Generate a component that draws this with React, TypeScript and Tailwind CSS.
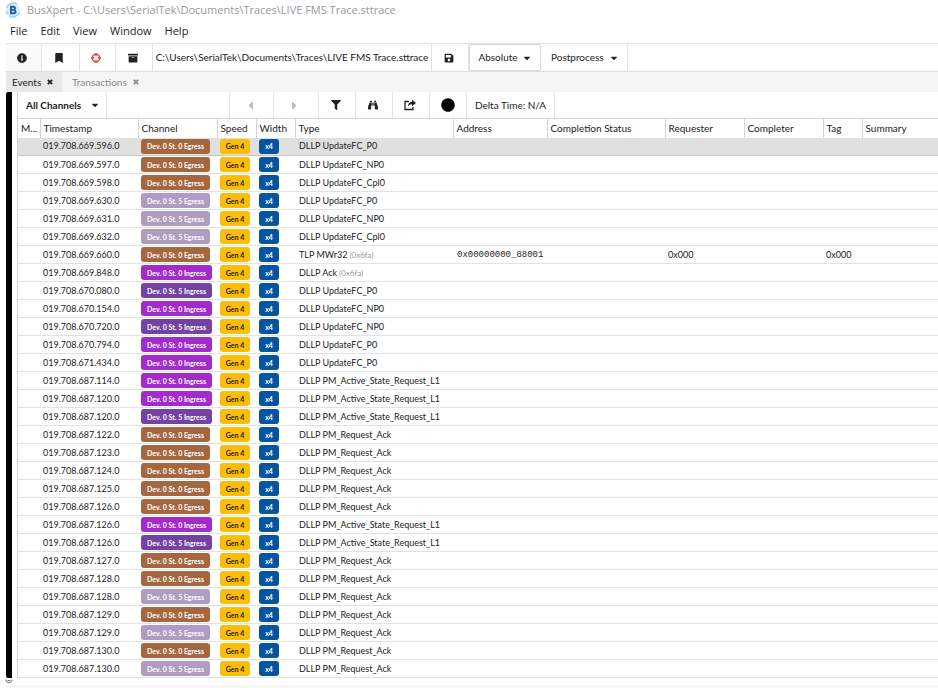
import {
  FaArchive,
  FaBinoculars,
  FaBookmark,
  FaCaretDown,
  FaCaretLeft,
  FaCaretRight,
  FaCircle,
  FaFilter,
  FaInfoCircle,
  FaSave,
} from "react-icons/fa";

type ChannelKey = "e0" | "e5" | "i0" | "i5";

interface TraceEvent {
  time: string;
  channel: ChannelKey;
  type: string;
  note?: string;
  address?: string;
  requester?: string;
  tag?: string;
}

const CHANNELS: Record<ChannelKey, { label: string; className: string }> = {
  e0: { label: "Dev. 0 St. 0 Egress", className: "w-[69px] bg-[#a5673f]" },
  e5: { label: "Dev. 0 St. 5 Egress", className: "w-[69px] bg-[#b09cc2]" },
  i0: { label: "Dev. 0 St. 0 Ingress", className: "w-[71px] bg-[#a32bcb]" },
  i5: { label: "Dev. 0 St. 5 Ingress", className: "w-[71px] bg-[#7442a5]" },
};

const EVENTS: TraceEvent[] = [
  { time: "019.708.669.596.0", channel: "e0", type: "DLLP UpdateFC_P0" },
  { time: "019.708.669.597.0", channel: "e0", type: "DLLP UpdateFC_NP0" },
  { time: "019.708.669.598.0", channel: "e0", type: "DLLP UpdateFC_Cpl0" },
  { time: "019.708.669.630.0", channel: "e5", type: "DLLP UpdateFC_P0" },
  { time: "019.708.669.631.0", channel: "e5", type: "DLLP UpdateFC_NP0" },
  { time: "019.708.669.632.0", channel: "e5", type: "DLLP UpdateFC_Cpl0" },
  {
    time: "019.708.669.660.0",
    channel: "e0",
    type: "TLP MWr32",
    note: "(0x6fa)",
    address: "0x00000000_88001",
    requester: "0x000",
    tag: "0x000",
  },
  { time: "019.708.669.848.0", channel: "i0", type: "DLLP Ack", note: "(0x6fa)" },
  { time: "019.708.670.080.0", channel: "i5", type: "DLLP UpdateFC_P0" },
  { time: "019.708.670.154.0", channel: "i0", type: "DLLP UpdateFC_NP0" },
  { time: "019.708.670.720.0", channel: "i5", type: "DLLP UpdateFC_NP0" },
  { time: "019.708.670.794.0", channel: "i0", type: "DLLP UpdateFC_P0" },
  { time: "019.708.671.434.0", channel: "i0", type: "DLLP UpdateFC_P0" },
  { time: "019.708.687.114.0", channel: "i0", type: "DLLP PM_Active_State_Request_L1" },
  { time: "019.708.687.120.0", channel: "i0", type: "DLLP PM_Active_State_Request_L1" },
  { time: "019.708.687.120.0", channel: "i5", type: "DLLP PM_Active_State_Request_L1" },
  { time: "019.708.687.122.0", channel: "e0", type: "DLLP PM_Request_Ack" },
  { time: "019.708.687.123.0", channel: "e0", type: "DLLP PM_Request_Ack" },
  { time: "019.708.687.124.0", channel: "e0", type: "DLLP PM_Request_Ack" },
  { time: "019.708.687.125.0", channel: "e0", type: "DLLP PM_Request_Ack" },
  { time: "019.708.687.126.0", channel: "e0", type: "DLLP PM_Request_Ack" },
  { time: "019.708.687.126.0", channel: "i0", type: "DLLP PM_Active_State_Request_L1" },
  { time: "019.708.687.126.0", channel: "i5", type: "DLLP PM_Active_State_Request_L1" },
  { time: "019.708.687.127.0", channel: "e0", type: "DLLP PM_Request_Ack" },
  { time: "019.708.687.128.0", channel: "e0", type: "DLLP PM_Request_Ack" },
  { time: "019.708.687.128.0", channel: "e5", type: "DLLP PM_Request_Ack" },
  { time: "019.708.687.129.0", channel: "e0", type: "DLLP PM_Request_Ack" },
  { time: "019.708.687.129.0", channel: "e5", type: "DLLP PM_Request_Ack" },
  { time: "019.708.687.130.0", channel: "e0", type: "DLLP PM_Request_Ack" },
  { time: "019.708.687.130.0", channel: "e5", type: "DLLP PM_Request_Ack" },
];

const COLUMNS = [
  { title: "M...", width: "w-[22px]" },
  { title: "Timestamp", width: "w-[98px]" },
  { title: "Channel", width: "w-[79px]" },
  { title: "Speed", width: "w-[39px]" },
  { title: "Width", width: "w-[39px]" },
  { title: "Type", width: "w-[158px]" },
  { title: "Address", width: "w-[94px]" },
  { title: "Completion Status", width: "w-[118px]" },
  { title: "Requester", width: "w-[79px]" },
  { title: "Completer", width: "w-[79px]" },
  { title: "Tag", width: "w-[39px]" },
  { title: "Summary", width: "" },
];

const CELL = "flex items-center border-r border-[#e4e4e4]";
const TOOL = "flex items-center justify-center border-r border-[#e4e4e4] pr-[3px]";

function BusLogo() {
  return (
    <svg viewBox="0 0 16 16" className="size-4" aria-hidden="true">
      <circle cx="8" cy="8" r="6.5" fill="#d9eef8" />
      <path
        d="M1.5 6A7 7 0 0 1 12 2.2M14.5 10A7 7 0 0 1 4 13.8M1.2 8.5A7 7 0 0 0 3 12"
        fill="none"
        stroke="#9fd0ea"
        strokeWidth="1.4"
      />
      <path
        d="M6 4.8h2.4a1.5 1.5 0 0 1 0 3.1H6zM6 7.9h2.8a1.7 1.7 0 0 1 0 3.4H6z"
        fill="none"
        stroke="#1c5f9c"
        strokeWidth="1.9"
      />
    </svg>
  );
}

function TargetIcon() {
  return (
    <svg viewBox="0 0 12 12" className="size-3" fill="none" stroke="#e24a4a" aria-hidden="true">
      <circle cx="6" cy="6" r="3.7" strokeWidth="1.5" />
      <path d="M6 1v3.2M6 7.8V11M1 6h3.2M7.8 6H11" strokeWidth="1.4" />
    </svg>
  );
}

function ShareIcon() {
  return (
    <svg viewBox="0 0 14 12" className="h-3 w-[14px]" aria-hidden="true">
      <path d="M6 2.5H2v8h8V8" fill="none" stroke="currentColor" strokeWidth="1.3" />
      <path d="M9 .8 13 4 9 7.2V5.3C7 5.3 5.8 6 5 7.8 4.900 4.700 6.300 2.900 9 2.700z" fill="currentColor" />
    </svg>
  );
}

function CloseIcon() {
  return (
    <svg viewBox="0 0 6 6" className="size-[6px]" aria-hidden="true">
      <path d="M.8 .8 5.200 5.200M5.200 .8 .8 5.200" stroke="currentColor" strokeWidth="1.7" />
    </svg>
  );
}

function TitleBar() {
  return (
    <header className="font-['Open_Sans','Noto_Sans',sans-serif] text-[11px]">
      <div className="flex h-5 items-center gap-[6px] pl-[5px] text-[#999]">
        <BusLogo />
        <h1>BusXpert - C:\Users\SerialTek\Documents\Traces\LIVE FMS Trace.sttrace</h1>
      </div>
      <nav className="flex h-[23px] items-center gap-[13px] pl-[10px] text-[#222]">
        {["File", "Edit", "View", "Window", "Help"].map((item) => (
          <button key={item}>{item}</button>
        ))}
      </nav>
    </header>
  );
}

function MainToolbar() {
  return (
    <div className="flex h-[29px] border-y border-[#e0e0e0] text-[10px]">
      <button aria-label="Info" className={`${TOOL} w-9 bg-[#fafafa]`}>
        <FaInfoCircle />
      </button>
      <button aria-label="Bookmark" className={`${TOOL} w-[38px]`}>
        <FaBookmark />
      </button>
      <button aria-label="Trigger" className={`${TOOL} w-9`}>
        <TargetIcon />
      </button>
      <button aria-label="Archive" className={`${TOOL} w-[37px]`}>
        <FaArchive />
      </button>
      <div className={`${CELL} w-[279px] justify-center`}>
        C:\Users\SerialTek\Documents\Traces\LIVE FMS Trace.sttrace
      </div>
      <button aria-label="Save" className={`${TOOL} w-[37px]`}>
        <FaSave />
      </button>
      <button className="flex w-[72px] items-center justify-center gap-1 rounded-xs border border-[#d8d8d8]">
        Absolute
        <FaCaretDown />
      </button>
      <button className={`${CELL} w-[87px] justify-between pr-2 pl-[10px]`}>
        Postprocess
        <FaCaretDown />
      </button>
    </div>
  );
}

function Tabs() {
  return (
    <div className="flex h-5 bg-[#f5f5f5] text-[10px]">
      <button className="flex w-14 items-center gap-[6px] bg-[#e8e8e8] pl-[6px]">
        Events <CloseIcon />
      </button>
      <button className="flex items-center gap-[6px] pl-[10px] text-[#888]">
        Transactions <CloseIcon />
      </button>
    </div>
  );
}

function EventToolbar() {
  return (
    <div className="flex h-[26px] text-[10px]">
      <button className={`${CELL} w-[89px] justify-between pr-[6px] pl-2 font-bold`}>
        All Channels
        <FaCaretDown />
      </button>
      <input aria-label="Search events" className="w-[123px] border-r border-[#e4e4e4] px-2 outline-none" />
      <button aria-label="Previous" className={`${TOOL} w-11 text-[13px] text-[#bbb]`}>
        <FaCaretLeft />
      </button>
      <button aria-label="Next" className={`${TOOL} w-[45px] text-[13px] text-[#bbb]`}>
        <FaCaretRight />
      </button>
      <button aria-label="Filter" className={`${TOOL} w-[37px]`}>
        <FaFilter />
      </button>
      <button aria-label="Find" className={`${TOOL} w-[37px]`}>
        <FaBinoculars />
      </button>
      <button aria-label="Export" className={`${TOOL} w-[37px]`}>
        <ShareIcon />
      </button>
      <button aria-label="Record" className={`${CELL} w-[37px] justify-center text-black`}>
        <FaCircle className="size-[14px]" />
      </button>
      <div className={`${CELL} w-[88px] justify-center`}>Delta Time: N/A</div>
    </div>
  );
}

function EventTable() {
  return (
    <table className="w-full table-fixed border-collapse text-left whitespace-nowrap">
      <thead className="text-[10px] leading-4">
        <tr className="h-[19px] border-t border-[#d4d4d4]">
          {COLUMNS.map((column) => (
            <th
              key={column.title}
              className={`${column.width} border-r border-[#d4d4d4] p-0 pl-[3px] font-normal last:border-r-0`}
            >
              {column.title}
            </th>
          ))}
        </tr>
      </thead>
      <tbody className="text-[9px] leading-[14px]">
        {EVENTS.map((event, index) => (
          <tr key={index} className="h-[18px] border-b border-[#e2e2e2] first:border-[#c8c8c8] first:bg-[#e0e0e0]">
            <td className="p-0" />
            <td className="p-0 pl-[3px]">{event.time}</td>
            <td className="p-0 pl-[3px]">
              <span
                className={`${CHANNELS[event.channel].className} flex h-[15px] items-center justify-center rounded-[3px] text-[7px] font-bold text-white`}
              >
                {CHANNELS[event.channel].label}
              </span>
            </td>
            <td className="p-0 pl-[3px]">
              <span className="flex h-[15px] w-[30px] items-center justify-center rounded-[3px] bg-[#fbbd08] text-[7px] font-bold">
                Gen 4
              </span>
            </td>
            <td className="p-0 pl-[3px]">
              <span className="flex h-[15px] w-5 items-center justify-center rounded-[3px] bg-[#04559f] text-[7px] font-bold text-white">
                x4
              </span>
            </td>
            <td className="p-0 pl-[4px]">
              <div className="flex h-[14px] items-center gap-[2px]">
                {event.type}
                {event.note && <span className="text-[8px] text-[#999]">{event.note}</span>}
              </div>
            </td>
            <td className="p-0 pl-[4px]">
              <div className="h-[14px] font-['Liberation_Mono',monospace]">{event.address}</div>
            </td>
            <td className="p-0" />
            <td className="p-0 pl-[3px]">{event.requester}</td>
            <td className="p-0" />
            <td className="p-0 pl-[3px]">{event.tag}</td>
            <td className="p-0" />
          </tr>
        ))}
      </tbody>
    </table>
  );
}

export default function App() {
  return (
    <div className="flex min-h-screen flex-col bg-white font-['Lato',sans-serif] text-[#222]">
      <TitleBar />
      <main className="flex flex-1 flex-col pl-[6px]">
        <MainToolbar />
        <Tabs />
        <div className="flex">
          <div className="relative w-[6px] rounded-l-xs bg-black">
            {/* drag handle under the marker bar */}
            <svg viewBox="0 0 8 6" className="absolute top-full -left-px h-[6px] w-2" aria-hidden="true">
              <path d="M1 1.500C1 6 7 6 7 1.500M2.500 2.500h3" fill="none" stroke="#777" strokeWidth="1" />
            </svg>
          </div>
          <section className="ml-[5px] min-w-0 flex-1 border-l border-[#d4d4d4]">
            <EventToolbar />
            <EventTable />
          </section>
        </div>
        <footer className="mt-auto h-[3px] bg-[#f8f8f8]" />
      </main>
    </div>
  );
}
